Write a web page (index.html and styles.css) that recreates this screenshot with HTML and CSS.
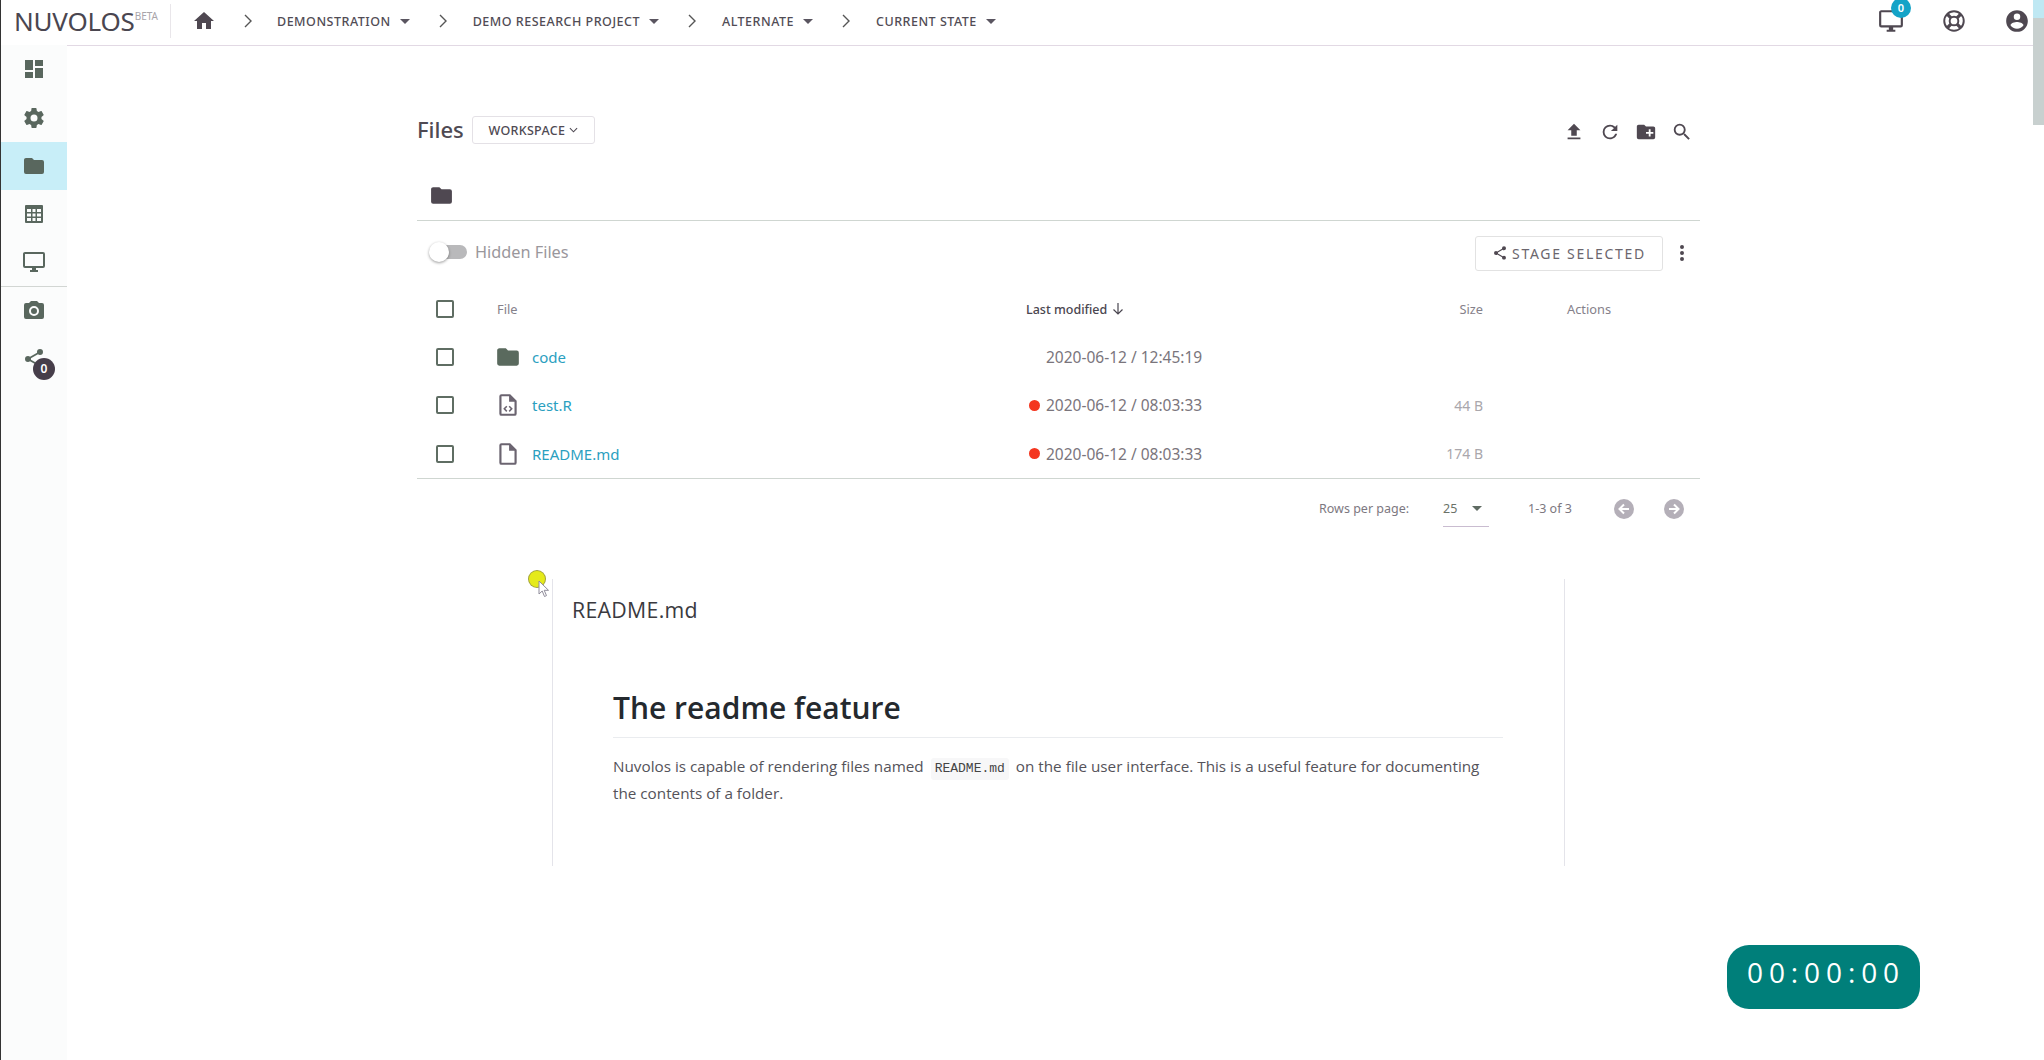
FILE: index.html
```html
<!DOCTYPE html>
<html lang="en">
<head>
<meta charset="utf-8">
<title>Nuvolos - Files</title>
<link rel="stylesheet" href="styles.css">
</head>
<body>
<header class="topbar">
  <div class="logo">NUVOLOS<sup class="beta">BETA</sup></div>
  <nav class="crumbs">
    <svg class="ic home" viewBox="0 0 24 24"><path d="M10 20v-6h4v6h5v-8h3L12 3 2 12h3v8z"/></svg>
    <svg class="chev" viewBox="0 0 10 16"><path d="M2 2l6 6-6 6"/></svg>
    <span class="crumb">DEMONSTRATION<i class="caret"></i></span>
    <svg class="chev" viewBox="0 0 10 16"><path d="M2 2l6 6-6 6"/></svg>
    <span class="crumb">DEMO RESEARCH PROJECT<i class="caret"></i></span>
    <svg class="chev" viewBox="0 0 10 16"><path d="M2 2l6 6-6 6"/></svg>
    <span class="crumb">ALTERNATE<i class="caret"></i></span>
    <svg class="chev" viewBox="0 0 10 16"><path d="M2 2l6 6-6 6"/></svg>
    <span class="crumb">CURRENT STATE<i class="caret"></i></span>
  </nav>
  <div class="top-actions">
    <span class="monitor">
      <svg class="ic top-ic" viewBox="0 0 24 24"><path d="M21 16H3V4h18m0-2H3c-1.11 0-2 .89-2 2v12a2 2 0 0 0 2 2h7v2H8v2h8v-2h-2v-2h7a2 2 0 0 0 2-2V4a2 2 0 0 0-2-2z"/></svg>
      <b class="badge-blue">0</b>
    </span>
    <svg class="top-ic buoy" viewBox="0 0 24 24"><circle cx="12" cy="12" r="9" /><circle cx="12" cy="12" r="4"/><path d="M5.500 5.500l3.700 3.700M18.500 5.500l-3.700 3.700M5.500 18.500l3.700-3.700M18.500 18.500l-3.700-3.700"/></svg>
    <svg class="ic top-ic" viewBox="0 0 24 24"><path d="M12 19.200c-2.500 0-4.710-1.280-6-3.200.03-2 4-3.100 6-3.100s5.970 1.100 6 3.100a7.232 7.232 0 0 1-6 3.200M12 5a3 3 0 0 1 3 3 3 3 0 0 1-3 3 3 3 0 0 1-3-3 3 3 0 0 1 3-3m0-3A10 10 0 0 0 2 12a10 10 0 0 0 10 10 10 10 0 0 0 10-10c0-5.530-4.500-10-10-10z"/></svg>
  </div>
</header>

<div class="shell">
  <aside class="sidebar">
    <a class="side-item"><svg class="ic side-ic" viewBox="0 0 24 24"><path d="M13 3v6h8V3m-8 18h8V11h-8M3 21h8v-6H3m0-2h8V3H3v10z"/></svg></a>
    <a class="side-item"><svg class="ic side-ic" viewBox="0 0 24 24"><path d="M12 15.5A3.5 3.5 0 0 1 8.5 12 3.5 3.5 0 0 1 12 8.5a3.5 3.5 0 0 1 3.5 3.5 3.5 3.5 0 0 1-3.5 3.5m7.43-2.53c.04-.32.07-.64.07-.97s-.03-.66-.07-1l2.11-1.63c.19-.15.24-.42.12-.64l-2-3.46c-.12-.22-.39-.31-.61-.22l-2.49 1c-.52-.39-1.06-.73-1.69-.98l-.37-2.65A.506.506 0 0 0 14 2h-4c-.25 0-.46.18-.5.42l-.37 2.65c-.63.25-1.17.59-1.69.98l-2.49-1c-.22-.09-.49 0-.61.22l-2 3.46c-.13.22-.07.49.12.64L4.57 11c-.04.34-.07.67-.07 1s.03.65.07.97l-2.11 1.66c-.19.15-.25.42-.12.64l2 3.46c.12.22.39.3.61.22l2.49-1.01c.52.4 1.06.74 1.69.99l.37 2.65c.04.24.25.42.5.42h4c.25 0 .46-.18.5-.42l.37-2.65c.63-.26 1.17-.59 1.69-.99l2.49 1.01c.22.08.49 0 .61-.22l2-3.46c.12-.22.07-.49-.12-.64l-2.11-1.66z"/></svg></a>
    <a class="side-item active"><svg class="ic side-ic" viewBox="0 0 24 24"><path d="M10 4H4c-1.11 0-2 .89-2 2v12a2 2 0 0 0 2 2h16a2 2 0 0 0 2-2V8a2 2 0 0 0-2-2h-8l-2-2z"/></svg></a>
    <a class="side-item"><svg class="ic side-ic" viewBox="0 0 24 24"><path fill-rule="evenodd" d="M4 3h16a1 1 0 0 1 1 1v16a1 1 0 0 1-1 1H4a1 1 0 0 1-1-1V4a1 1 0 0 1 1-1zm1 4v3h4V7H5zm5.500 0v3h3V7h-3zM15 7v3h4V7h-4zM5 11.500v3h4v-3H5zm5.500 0v3h3v-3h-3zm4.500 0v3h4v-3h-4zM5 16v3h4v-3H5zm5.500 0v3h3v-3h-3zm4.500 0v3h4v-3h-4z"/></svg></a>
    <a class="side-item last-main"><svg class="ic side-ic" viewBox="0 0 24 24"><path d="M21 16H3V4h18m0-2H3c-1.11 0-2 .89-2 2v12a2 2 0 0 0 2 2h7v2H8v2h8v-2h-2v-2h7a2 2 0 0 0 2-2V4a2 2 0 0 0-2-2z"/></svg></a>
    <a class="side-item"><svg class="ic side-ic" viewBox="0 0 24 24"><path d="M4 4h3l2-2h6l2 2h3a2 2 0 0 1 2 2v12a2 2 0 0 1-2 2H4a2 2 0 0 1-2-2V6a2 2 0 0 1 2-2m8 3a5 5 0 0 0-5 5 5 5 0 0 0 5 5 5 5 0 0 0 5-5 5 5 0 0 0-5-5m0 2a3 3 0 0 1 3 3 3 3 0 0 1-3 3 3 3 0 0 1-3-3 3 3 0 0 1 3-3z"/></svg></a>
    <a class="side-item share"><svg class="ic side-ic" viewBox="0 0 24 24"><path d="M18 16.08c-.76 0-1.44.3-1.96.77L8.91 12.7c.05-.23.09-.46.09-.7s-.04-.47-.09-.7l7.05-4.11c.54.5 1.25.81 2.04.81a3 3 0 0 0 3-3 3 3 0 0 0-3-3 3 3 0 0 0-3 3c0 .24.04.47.09.7L8.04 9.81C7.5 9.31 6.79 9 6 9a3 3 0 0 0-3 3 3 3 0 0 0 3 3c.79 0 1.5-.31 2.04-.81l7.12 4.15c-.05.21-.08.43-.08.66 0 1.61 1.31 2.92 2.92 2.92 1.61 0 2.92-1.31 2.92-2.92a2.92 2.92 0 0 0-2.92-2.92z"/></svg><b class="badge-dark">0</b></a>
  </aside>

  <main class="content">
    <section class="files">
      <div class="title-row">
        <h1 class="page-title">Files</h1>
        <button class="workspace">WORKSPACE<svg class="mini" viewBox="0 0 10 6"><path d="M1 1l4 4 4-4"/></svg></button>
        <div class="tools">
          <svg class="ic tool" viewBox="0 0 24 24"><path d="M9 16v-6H5l7-7 7 7h-4v6H9m-4 4v-2h14v2H5z"/></svg>
          <svg class="ic tool" viewBox="0 0 24 24"><path d="M17.65 6.35A7.958 7.958 0 0 0 12 4a8 8 0 0 0-8 8 8 8 0 0 0 8 8c3.73 0 6.84-2.55 7.73-6h-2.08A5.99 5.99 0 0 1 12 18a6 6 0 0 1-6-6 6 6 0 0 1 6-6c1.66 0 3.14.69 4.22 1.78L13 11h7V4l-2.35 2.35z"/></svg>
          <svg class="ic tool" viewBox="0 0 24 24"><path fill-rule="evenodd" d="M10 4H4c-1.11 0-2 .89-2 2v12a2 2 0 0 0 2 2h16a2 2 0 0 0 2-2V8c0-1.11-.9-2-2-2h-8l-2-2zm5 5h2v3h3v2h-3v3h-2v-3h-3v-2h3V9z"/></svg>
          <svg class="ic tool" viewBox="0 0 24 24"><path d="M9.5 3A6.5 6.5 0 0 1 16 9.5c0 1.61-.59 3.09-1.56 4.23l.27.27h.79l5 5-1.5 1.5-5-5v-.79l-.27-.27A6.516 6.516 0 0 1 9.5 16 6.5 6.5 0 0 1 3 9.5 6.5 6.5 0 0 1 9.5 3m0 2C7 5 5 7 5 9.5S7 14 9.5 14 14 12 14 9.5 12 5 9.5 5z"/></svg>
        </div>
      </div>

      <div class="path-row">
        <svg class="ic path-ic" viewBox="0 0 24 24"><path d="M10 4H4c-1.11 0-2 .89-2 2v12a2 2 0 0 0 2 2h16a2 2 0 0 0 2-2V8a2 2 0 0 0-2-2h-8l-2-2z"/></svg>
      </div>

      <div class="filter-row">
        <span class="switch"><i class="track"></i><i class="thumb"></i></span>
        <span class="hidden-label">Hidden Files</span>
        <button class="stage"><svg class="ic stage-ic" viewBox="0 0 24 24"><path d="M18 16.08c-.76 0-1.44.3-1.96.77L8.91 12.7c.05-.23.09-.46.09-.7s-.04-.47-.09-.7l7.05-4.11c.54.5 1.25.81 2.04.81a3 3 0 0 0 3-3 3 3 0 0 0-3-3 3 3 0 0 0-3 3c0 .24.04.47.09.7L8.04 9.81C7.5 9.31 6.79 9 6 9a3 3 0 0 0-3 3 3 3 0 0 0 3 3c.79 0 1.5-.31 2.04-.81l7.12 4.15c-.05.21-.08.43-.08.66 0 1.61 1.31 2.92 2.92 2.92 1.61 0 2.92-1.31 2.92-2.92a2.92 2.92 0 0 0-2.92-2.92z"/></svg>STAGE SELECTED</button>
        <svg class="ic dots" viewBox="0 0 24 24"><path d="M12 16a2 2 0 0 1 2 2 2 2 0 0 1-2 2 2 2 0 0 1-2-2 2 2 0 0 1 2-2m0-6a2 2 0 0 1 2 2 2 2 0 0 1-2 2 2 2 0 0 1-2-2 2 2 0 0 1 2-2m0-6a2 2 0 0 1 2 2 2 2 0 0 1-2 2 2 2 0 0 1-2-2 2 2 0 0 1 2-2z"/></svg>
      </div>

      <div class="table">
        <div class="row head">
          <span class="cell-check"><i class="check"></i></span>
          <span class="th">File</span>
          <span class="th sorted">Last modified<svg class="sort" viewBox="0 0 12 14"><path d="M6 1v11M1.500 7.500L6 12l4.500-4.500"/></svg></span>
          <span class="th size-cell">Size</span>
          <span class="th actions-cell">Actions</span>
        </div>
        <div class="row">
          <span class="cell-check"><i class="check"></i></span>
          <span class="name"><svg class="ic file-ic folder-green" viewBox="0 0 24 24"><path d="M10 4H4c-1.11 0-2 .89-2 2v12a2 2 0 0 0 2 2h16a2 2 0 0 0 2-2V8a2 2 0 0 0-2-2h-8l-2-2z"/></svg><a class="link">code</a></span>
          <span class="date">2020-06-12 / 12:45:19</span>
          <span class="size-cell"></span>
          <span class="actions-cell"></span>
        </div>
        <div class="row">
          <span class="cell-check"><i class="check"></i></span>
          <span class="name"><svg class="ic file-ic" viewBox="0 0 24 24"><path d="M14 2H6a2 2 0 0 0-2 2v16a2 2 0 0 0 2 2h12a2 2 0 0 0 2-2V8l-6-6m4 18H6V4h7v5h5v11z"/><path d="M10.400 12.600l-2.800 2.900 2.800 2.900 1-1-1.800-1.900 1.800-1.900zM13.600 12.600l2.800 2.900-2.800 2.900-1-1 1.800-1.900-1.800-1.900z"/></svg><a class="link">test.R</a></span>
          <span class="date changed">2020-06-12 / 08:03:33</span>
          <span class="size-cell size-val">44 B</span>
          <span class="actions-cell"></span>
        </div>
        <div class="row">
          <span class="cell-check"><i class="check"></i></span>
          <span class="name"><svg class="ic file-ic" viewBox="0 0 24 24"><path d="M14 2H6a2 2 0 0 0-2 2v16a2 2 0 0 0 2 2h12a2 2 0 0 0 2-2V8l-6-6m4 18H6V4h7v5h5v11z"/></svg><a class="link">README.md</a></span>
          <span class="date changed">2020-06-12 / 08:03:33</span>
          <span class="size-cell size-val">174 B</span>
          <span class="actions-cell"></span>
        </div>
      </div>

      <div class="pager">
        <span class="rows-label">Rows per page:</span>
        <span class="rows-select">25<i class="caret small"></i></span>
        <span class="range">1-3 of 3</span>
        <svg class="page-btn" viewBox="0 0 24 24"><circle cx="12" cy="12" r="10"/><path class="arrow" d="M17 12H8M12 7.500L7.500 12l4.500 4.500"/></svg>
        <svg class="page-btn" viewBox="0 0 24 24"><circle cx="12" cy="12" r="10"/><path class="arrow" d="M7 12h9M12 7.500l4.500 4.500-4.500 4.500"/></svg>
      </div>

      <article class="readme">
        <h2 class="readme-name">README.md</h2>
        <div class="readme-body">
          <h3 class="readme-h">The readme feature</h3>
          <p class="readme-p">Nuvolos is capable of rendering files named <code class="chip">README.md</code> on the file user interface. This is a useful feature for documenting the contents of a folder.</p>
        </div>
      </article>
    </section>
  </main>
</div>

<div class="scroll-thumb"></div>
<div class="pointer">
  <i class="pointer-dot"></i>
  <svg class="pointer-arrow" viewBox="0 0 12 18"><path d="M1 1v13l3.200-3 2.300 5.500 2-.9-2.300-5.300H10.500z"/></svg>
</div>
<div class="timer">00:00:00</div>
</body>
</html>
```
FILE: styles.css
```css
* { box-sizing: border-box; }
html, body { margin: 0; height: 100%; }
body {
  background: #fff;
  color: #6f6a70;
  font-family: "Noto Sans", "Open Sans", sans-serif;
  overflow: hidden;
  border-left: 1px solid #333;
}
svg { display: block; flex: none; }
.ic { fill: #4f4851; }

/* top bar */
.topbar {
  height: 46px;
  display: flex;
  align-items: center;
  border-bottom: 1px solid #e2d9e4;
  padding: 0 14px 3px 0;
}
.logo {
  width: 170px;
  height: 34px;
  padding-left: 13px;
  font-size: 26px;
  line-height: 34px;
  color: #4a4650;
  letter-spacing: -.2px;
  border-right: 1px solid #e9e6ea;
  white-space: nowrap;
}
.beta {
  font-size: 10px;
  color: #a9a5aa;
  vertical-align: 11px;
  line-height: 0;
  letter-spacing: 0;
}
.crumbs { display: flex; align-items: center; margin-left: 21px; }
.home { width: 24px; height: 24px; }
.chev { width: 10px; height: 16px; margin: 0 25px 0 28px; fill: none; stroke: #555; stroke-width: 1.4; }
.crumbs .home + .chev { margin-left: 27px; }
.crumbs .home + .chev + .crumb { margin-left: -1px; }
.crumb {
  display: flex;
  align-items: center;
  font-size: 12.500px;
  font-weight: 500;
  letter-spacing: .5px;
  color: #514c55;
  white-space: nowrap;
}
.caret {
  width: 0;
  height: 0;
  margin-left: 9px;
  border-left: 5px solid transparent;
  border-right: 5px solid transparent;
  border-top: 5px solid #5a5560;
}
.top-actions { margin-left: auto; display: flex; align-items: center; gap: 37px; }
.top-ic { width: 26px; height: 26px; }
.monitor { position: relative; display: block; }
.badge-blue {
  position: absolute;
  top: -10px;
  left: 13px;
  width: 20px;
  height: 20px;
  border-radius: 50%;
  background: #14a3c7;
  color: #fff;
  font-size: 11px;
  font-weight: 600;
  line-height: 20px;
  text-align: center;
}
.buoy { fill: none; stroke: #4f4851; stroke-width: 1.800; }
.buoy path { stroke-width: 3; }

/* sidebar */
.shell { display: flex; height: calc(100% - 46px); }
.sidebar {
  width: 66px;
  flex: none;
  margin-top: -1px;
  background: #fbfcfc;
}
.side-item {
  position: relative;
  display: flex;
  align-items: center;
  justify-content: center;
  height: 48.400px;
}
.side-item.active { background: #c8eef8; }
.side-item.last-main { border-bottom: 1px solid #d2d6d3; }
.side-ic { width: 24px; height: 24px; fill: #59675e; }
.share .side-ic { transform: translate(0, -1px); }
.badge-dark {
  position: absolute;
  top: 23px;
  left: 32px;
  width: 22px;
  height: 22px;
  border-radius: 50%;
  background: #463e4a;
  color: #fff;
  font-size: 12px;
  font-weight: 600;
  line-height: 22px;
  text-align: center;
}

/* main */
.content { flex: 1; padding: 70px 0 0 350px; }
.files { width: 1283px; }
.title-row { display: flex; align-items: center; height: 28px; }
.page-title { margin: -2px 0 0; font-size: 22px; font-weight: 500; color: #4f4a53; line-height: 28px; }
.workspace {
  display: flex;
  align-items: center;
  gap: 4px;
  margin-left: 8px;
  height: 28px;
  width: 123px;
  justify-content: center;
  background: #fff;
  border: 1px solid #e4e1e6;
  border-radius: 3px;
  font: 500 12.500px "Noto Sans", sans-serif;
  letter-spacing: .3px;
  color: #4f4a53;
}
.mini { width: 9px; height: 6px; fill: none; stroke: #4f4a53; stroke-width: 1.200; }
.tools { margin-left: auto; margin-right: 7px; display: flex; gap: 14px; padding-top: 3px; }
.tool { width: 22px; height: 22px; }

.path-row {
  height: 77px;
  display: flex;
  align-items: center;
  padding: 27px 0 0 12px;
  border-bottom: 1px solid #cfd6d1;
}
.path-ic { width: 25px; height: 25px; }

.filter-row { height: 64px; display: flex; align-items: center; padding-left: 12px; }
.switch { position: relative; width: 38px; height: 20px; display: block; margin-top: -2px; }
.track {
  position: absolute;
  left: 10px;
  top: 3px;
  width: 28px;
  height: 14px;
  border-radius: 7px;
  background: #b9b9bb;
}
.thumb {
  position: absolute;
  left: 0;
  top: 0;
  width: 20px;
  height: 20px;
  border-radius: 50%;
  background: #fff;
  box-shadow: 0 1px 3px rgba(0, 0, 0, .4);
}
.hidden-label { margin: -2px 0 0 8px; font-size: 16.300px; color: #9a979c; }
.stage {
  margin-left: auto;
  display: flex;
  align-items: center;
  height: 35px;
  width: 188px;
  justify-content: center;
  gap: 4px;
  background: #fff;
  border: 1px solid #e2e2e2;
  border-radius: 3px;
  font: 14px "Noto Sans", sans-serif;
  letter-spacing: 1.700px;
  color: #6b666d;
}
.stage-ic { width: 16px; height: 16px; }
.dots { width: 24px; height: 24px; margin: 0 6px 0 7px; }

/* table */
.table { border-bottom: 1px solid #cfd6d1; }
.row {
  display: grid;
  grid-template-columns: 80px 529px 300px 157px 1fr;
  align-items: center;
  height: 48.330px;
}
.row.head { height: 48px; }
.cell-check { padding-left: 19px; display: flex; }
.check { width: 18px; height: 18px; border: 2px solid #5f6d63; border-radius: 2px; display: block; }
.th { font-size: 12.800px; color: #85818a; }
.sorted { display: flex; align-items: center; gap: 5px; font-size: 12.500px; font-weight: 500; color: #4a4650; }
.sort { width: 12px; height: 14px; fill: none; stroke: #4a4650; stroke-width: 1.200; }
.name { display: flex; align-items: center; }
.file-ic { width: 26px; height: 26px; margin-left: -2px; margin-right: 11px; fill: #6b6470; }
.folder-green { fill: #5a6a5e; }
.link { font-size: 15px; color: #2ba0bf; }
.date { font-size: 15.500px; color: #7a757c; padding-left: 20px; position: relative; }
.changed::before {
  content: "";
  position: absolute;
  left: 3px;
  top: 50%;
  width: 11px;
  height: 11px;
  margin-top: -5.500px;
  border-radius: 50%;
  background: #f4361f;
}
.size-cell { text-align: right; }
.size-val { font-size: 14px; color: #aaa7ac; }
.actions-cell { padding-left: 84px; }

/* pager */
.pager { height: 60px; display: flex; align-items: center; padding-left: 902px; color: #7d787f; font-size: 12.500px; }
.pager > * { flex: none; }
.rows-label { width: 124px; }
.rows-select {
  display: flex;
  align-items: center;
  width: 46px;
  height: 36px;
  padding-top: 1px;
  border-bottom: 1px solid #c9bcd0;
  color: #6b7268;
}
.caret.small { margin-left: 15px; border-top-color: #5f6b63; }
.range { margin-left: 39px; width: 84px; }
.page-btn { width: 24px; height: 24px; margin-right: 26px; }
.page-btn circle { fill: #b4afb8; }
.arrow { fill: none; stroke: #fff; stroke-width: 2; }

/* readme */
.readme {
  margin: 40px 0 0 135px;
  width: 1013px;
  height: 287px;
  border-left: 1px solid #e4e4ea;
  border-right: 1px solid #e4e4ea;
  padding: 16px 19px 0;
  font-family: "Open Sans", "Noto Sans", sans-serif;
}
.readme-name { margin: 0; font-size: 21.300px; font-weight: 400; letter-spacing: .3px; line-height: 30px; color: #3a3a3f; }
.readme-body { margin: 61px 0 0 41px; width: 890px; }
.readme-h {
  margin: 0;
  font-size: 30px;
  font-weight: 600;
  line-height: 44px;
  color: #24292e;
  padding-bottom: 7px;
  border-bottom: 1px solid #eaecef;
}
.readme-p { margin: 15px 0 0; font-size: 15.250px; line-height: 27px; color: #55535a; width: 870px; }
.chip {
  display: inline-block;
  margin: 0 3px;
  padding: 0 4px;
  background: #f7f7f8;
  border-radius: 3px;
  font-family: "Liberation Mono", monospace;
  font-size: 13px;
  line-height: 22px;
  color: #444;
}

/* overlays */
.scroll-thumb {
  position: absolute;
  right: 0;
  top: 0;
  width: 11px;
  height: 125px;
  background: linear-gradient(#bfe8f3 0, #bfe8f3 18px, #c8d0cf 18px);
}
.pointer { position: absolute; left: 529px; top: 571px; width: 24px; height: 28px; }
.pointer-dot {
  position: absolute;
  left: 0;
  top: 0;
  width: 16px;
  height: 16px;
  border-radius: 50%;
  background: #e5ea1a;
  box-shadow: 0 0 0 1px #a2a23a;
}
.pointer-arrow {
  position: absolute;
  left: 9px;
  top: 9px;
  width: 12px;
  height: 18px;
  fill: #fff;
  stroke: #8f8c9a;
  stroke-width: 1;
}
.timer {
  position: absolute;
  left: 1727px;
  top: 945px;
  width: 193px;
  height: 64px;
  padding-left: 5px;
  border-radius: 22px;
  background: #007f7a;
  color: #fff;
  font-family: "Open Sans", sans-serif;
  font-size: 28px;
  letter-spacing: 5.900px;
  line-height: 55px;
  text-align: center;
}
```
